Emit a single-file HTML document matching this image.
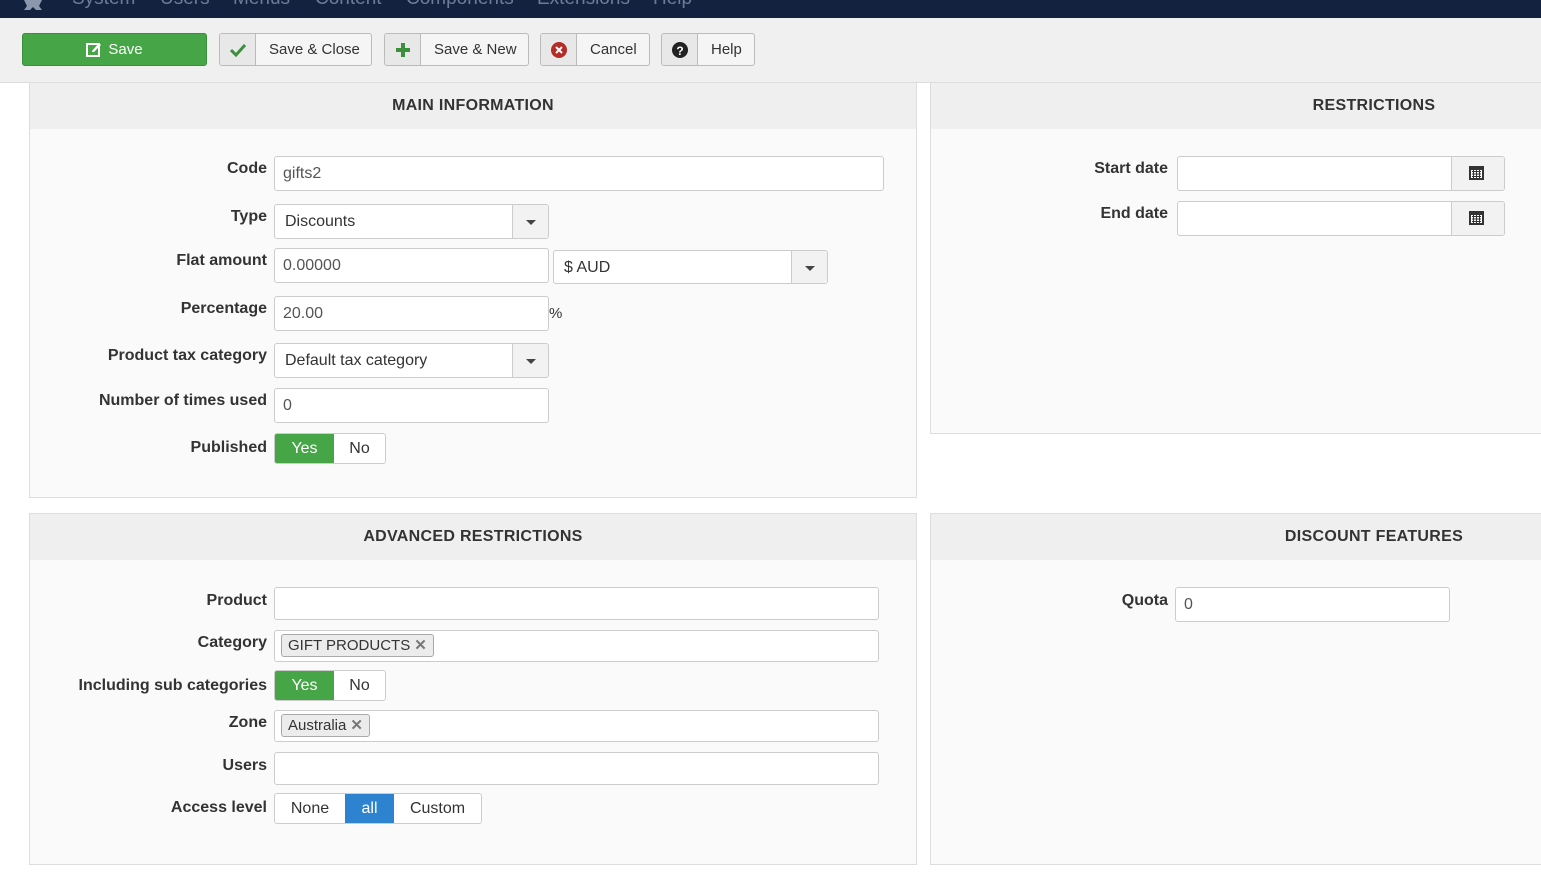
<!DOCTYPE html>
<html><head><meta charset="utf-8">
<style>
*{box-sizing:border-box;margin:0;padding:0}
body{width:1541px;height:876px;overflow:hidden;background:#fff;font-family:"Liberation Sans",Arial,sans-serif;font-size:15px;color:#333;position:relative}
.a{position:absolute}
#nav{left:0;top:0;width:1541px;height:18px;background:#13233f;overflow:hidden}
#nav span{position:absolute;top:-12px;font-size:19px;color:#6d7d96}
#tb{left:0;top:18px;width:1541px;height:65px;background:#f0f0f0;border-bottom:1px solid #ddd}
.btn{position:absolute;top:33px;height:33px;border:1px solid #bbb;border-radius:3px;background:#f5f5f5;font-size:15px;color:#333;display:flex;align-items:center;overflow:hidden;white-space:nowrap}
.btn .ic{width:36px;height:100%;border-right:1px solid #bbb;background:#e8e8e8;display:flex;align-items:center;justify-content:center;flex:none}
.btn .tx{padding:0 13px}
.panel{position:absolute;background:#fafafa;border:1px solid #ddd}
.ph{height:46px;background:#efefef;text-align:center;font-weight:bold;font-size:16px;line-height:46px;color:#333;letter-spacing:.3px}
.lbl{position:absolute;font-weight:bold;font-size:16px;text-align:right;color:#333;white-space:nowrap}
.inp{position:absolute;background:#fff;border:1px solid #ccc;border-radius:3px;height:35px;font-size:16px;color:#555;padding-left:8px;line-height:33px;overflow:hidden;white-space:nowrap}
.dd{position:absolute;right:0;top:0;width:36px;height:100%;border-left:1px solid #ccc;background:#f2f2f2}
.dd:after{content:"";position:absolute;left:13px;top:15px;border:5px solid transparent;border-top:5px solid #444;border-bottom:0}
.tag{display:inline-block;height:23px;line-height:21px;border:1px solid #aaa;border-radius:3px;background:#ececec;padding:0 6px;font-size:15px;color:#333;margin-top:3px;margin-left:-2px}
.tag b{color:#777;font-size:15px;margin-left:4px}
.tog{position:absolute;height:31px;border:1px solid #ccc;border-radius:3px;background:#fff;display:flex;overflow:hidden;font-size:16px}
.tog div{display:flex;align-items:center;justify-content:center;height:100%}
.cal{position:absolute;right:0;top:0;width:53px;height:100%;border-left:1px solid #ccc;background:#f2f2f2}
</style></head><body>
<div id="nav" class="a">
<svg class="a" style="left:22px;top:0" width="22" height="10"><path d="M2 0h18l-3 6 3 4h-6l-3-3-3 3H2l3-4z" fill="#8a97ad"/></svg>
<span style="left:72px">System</span><span style="left:160px">Users</span><span style="left:233px">Menus</span><span style="left:315px">Content</span><span style="left:406px">Components</span><span style="left:537px">Extensions</span><span style="left:653px">Help</span>
</div>
<div id="tb" class="a"></div>
<div class="btn" style="left:22px;width:185px;background:#46a546;border-color:#3b8e3b;color:#fff;justify-content:center">
<svg width="16" height="15" style="margin-right:6px"><rect x="1" y="2" width="12" height="12" fill="none" stroke="#fff" stroke-width="2"/><path d="M6 9l7-8 2 2-7 7H6z" fill="#fff"/></svg>Save</div>
<div class="btn" style="left:219px;width:153px"><div class="ic"><svg width="16" height="14"><path d="M1 7l5 5L15 2" stroke="#3c8f3c" stroke-width="3" fill="none"/></svg></div><div class="tx">Save &amp; Close</div></div>
<div class="btn" style="left:384px;width:145px"><div class="ic"><svg width="16" height="16"><path d="M8 1v14M1 8h14" stroke="#3c8f3c" stroke-width="4"/></svg></div><div class="tx">Save &amp; New</div></div>
<div class="btn" style="left:540px;width:110px"><div class="ic"><svg width="16" height="16"><circle cx="8" cy="8" r="8" fill="#b52b27"/><path d="M5 5l6 6M11 5l-6 6" stroke="#fff" stroke-width="2"/></svg></div><div class="tx">Cancel</div></div>
<div class="btn" style="left:661px;width:94px"><div class="ic"><svg width="16" height="16"><circle cx="8" cy="8" r="8" fill="#222"/><text x="8" y="13" font-size="12" font-weight="bold" fill="#fff" text-anchor="middle" font-family="Liberation Sans">?</text></svg></div><div class="tx">Help</div></div>

<div class="panel" style="left:29px;top:83px;width:888px;height:415px;border-top:0"><div class="ph">MAIN INFORMATION</div></div>
<div class="panel" style="left:930px;top:83px;width:888px;height:351px;border-top:0"><div class="ph">RESTRICTIONS</div></div>
<div class="panel" style="left:29px;top:513px;width:888px;height:352px"><div class="ph">ADVANCED RESTRICTIONS</div></div>
<div class="panel" style="left:930px;top:513px;width:888px;height:352px"><div class="ph">DISCOUNT FEATURES</div></div>

<div class="lbl" style="right:1274px;top:160px">Code</div>
<div class="inp" style="left:274px;top:156px;width:610px">gifts2</div>
<div class="lbl" style="right:1274px;top:208px">Type</div>
<div class="inp" style="left:274px;top:204px;width:275px;padding-left:10px;color:#333">Discounts<div class="dd"></div></div>
<div class="lbl" style="right:1274px;top:252px">Flat amount</div>
<div class="inp" style="left:274px;top:248px;width:275px">0.00000</div>
<div class="inp" style="left:553px;top:250px;width:275px;padding-left:10px;color:#333;height:34px">$ AUD<div class="dd"></div></div>
<div class="lbl" style="right:1274px;top:300px">Percentage</div>
<div class="inp" style="left:274px;top:296px;width:275px">20.00</div>
<div class="a" style="left:549px;top:305px;font-size:15px">%</div>
<div class="lbl" style="right:1274px;top:347px">Product tax category</div>
<div class="inp" style="left:274px;top:343px;width:275px;padding-left:10px;color:#333">Default tax category<div class="dd"></div></div>
<div class="lbl" style="right:1274px;top:392px">Number of times used</div>
<div class="inp" style="left:274px;top:388px;width:275px">0</div>
<div class="lbl" style="right:1274px;top:439px">Published</div>
<div class="tog" style="left:274px;top:433px;width:112px"><div style="width:59px;background:#46a546;color:#fff">Yes</div><div style="flex:1;color:#333">No</div></div>

<div class="lbl" style="right:373px;top:160px">Start date</div>
<div class="inp" style="left:1177px;top:156px;width:328px"><div class="cal"><svg class="a" style="left:17px;top:8px" width="15" height="15"><rect x="0" y="1" width="15" height="14" fill="#333"/><rect x="2" y="5" width="11" height="8" fill="#fff"/><path d="M3 6.5h9M3 9h9M3 11.5h9M4.5 5v8M7.5 5v8M10.5 5v8" stroke="#333" stroke-width="1"/></svg></div></div>
<div class="lbl" style="right:373px;top:205px">End date</div>
<div class="inp" style="left:1177px;top:201px;width:328px"><div class="cal"><svg class="a" style="left:17px;top:8px" width="15" height="15"><rect x="0" y="1" width="15" height="14" fill="#333"/><rect x="2" y="5" width="11" height="8" fill="#fff"/><path d="M3 6.5h9M3 9h9M3 11.5h9M4.5 5v8M7.5 5v8M10.5 5v8" stroke="#333" stroke-width="1"/></svg></div></div>

<div class="lbl" style="right:1274px;top:592px">Product</div>
<div class="inp" style="left:274px;top:587px;width:605px;height:33px"></div>
<div class="lbl" style="right:1274px;top:634px">Category</div>
<div class="inp" style="left:274px;top:630px;width:605px;height:32px;line-height:normal"><span class="tag">GIFT PRODUCTS<b>✕</b></span></div>
<div class="lbl" style="right:1274px;top:677px">Including sub categories</div>
<div class="tog" style="left:274px;top:670px;width:112px"><div style="width:59px;background:#46a546;color:#fff">Yes</div><div style="flex:1;color:#333">No</div></div>
<div class="lbl" style="right:1274px;top:714px">Zone</div>
<div class="inp" style="left:274px;top:710px;width:605px;height:32px;line-height:normal"><span class="tag">Australia<b>✕</b></span></div>
<div class="lbl" style="right:1274px;top:757px">Users</div>
<div class="inp" style="left:274px;top:752px;width:605px;height:33px"></div>
<div class="lbl" style="right:1274px;top:799px">Access level</div>
<div class="tog" style="left:274px;top:793px;width:208px"><div style="width:70px;color:#333">None</div><div style="width:49px;background:#2d83d0;color:#fff">all</div><div style="flex:1;color:#333">Custom</div></div>

<div class="lbl" style="right:373px;top:592px">Quota</div>
<div class="inp" style="left:1175px;top:587px;width:275px">0</div>
</body></html>
